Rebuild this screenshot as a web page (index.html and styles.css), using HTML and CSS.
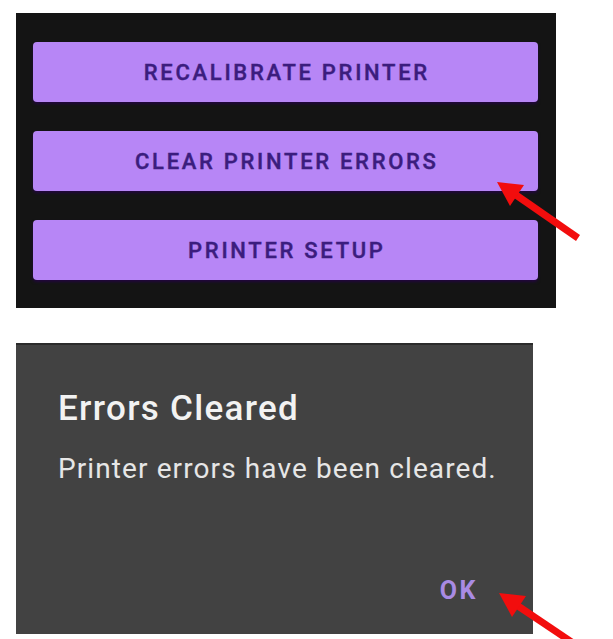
FILE: index.html
```html
<!DOCTYPE html>
<html lang="en">
<head>
    <meta charset="UTF-8">
    <meta name="viewport" content="width=device-width, initial-scale=1.0">
    <title>Printer tools</title>
    <link rel="stylesheet" href="styles.css">
</head>
<body>
    <div class="page">
        <div class="menu">
            <button class="menu-button">RECALIBRATE PRINTER</button>
            <button class="menu-button">CLEAR PRINTER ERRORS</button>
            <button class="menu-button">PRINTER SETUP</button>
        </div>

        <div class="dialog">
            <h2 class="dialog-title">Errors Cleared</h2>
            <p class="dialog-text">Printer errors have been cleared.</p>
            <div class="dialog-actions">
                <button class="dialog-ok">OK</button>
            </div>
        </div>

        <!-- pointer arrows -->
        <svg class="arrows" width="613" height="639" viewBox="0 0 613 639">
            <line x1="578" y1="238" x2="516" y2="195" stroke="#f20d0d" stroke-width="7"/>
            <polygon points="497,182 524,185 510,206" fill="#f20d0d"/>
            <line x1="582" y1="649" x2="518" y2="606" stroke="#f20d0d" stroke-width="7"/>
            <polygon points="499,593 526,596 512,617" fill="#f20d0d"/>
        </svg>
    </div>
</body>
</html>
```

FILE: styles.css
```css
body {
    margin: 0;
    background-color: #ffffff;
    font-family: Roboto, "Liberation Sans", sans-serif;
}
.page {
    position: relative;
    width: 613px;
    height: 639px;
    padding: 13px 0 0 16px;
    box-sizing: border-box;
    overflow: hidden;
}
.menu {
    width: 540px;
    height: 295px;
    box-sizing: border-box;
    padding: 29px 18px 0 17px;
    background-color: #141414;
    display: flex;
    flex-direction: column;
    gap: 29px;
}
.menu-button {
    height: 60px;
    border: none;
    border-radius: 4px;
    background-color: #b786f6;
    color: #3b1d7e;
    font-family: Roboto, sans-serif;
    font-size: 22px;
    font-weight: 500;
    letter-spacing: 2.7px;
    text-indent: 2.7px;
    -webkit-text-stroke: 0.4px #3b1d7e;
    box-shadow: 0 2px 3px rgba(40, 0, 80, 0.7);
    cursor: pointer;
}
.dialog {
    margin-top: 35px;
    width: 517px;
    height: 291px;
    box-sizing: border-box;
    padding: 44px 16px 28px 42px;
    background-color: #424242;
    border-top: 2px solid #2b2b2b;
    display: flex;
    flex-direction: column;
}
.dialog-title {
    margin: 0;
    font-size: 35px;
    line-height: 40px;
    font-weight: 500;
    letter-spacing: 1.3px;
    color: #f2f2f2;
}
.dialog-text {
    margin: 24px 0 0;
    font-size: 28px;
    line-height: 32px;
    letter-spacing: 1.1px;
    white-space: nowrap;
    color: #e6e6e6;
}
.dialog-actions {
    margin-top: auto;
    padding-right: 39px;
    display: flex;
    justify-content: flex-end;
}
.dialog-ok {
    padding: 0;
    border: none;
    background: none;
    font-family: Roboto, sans-serif;
    font-size: 25px;
    line-height: 30px;
    font-weight: 700;
    letter-spacing: 2.5px;
    color: #a98be4;
    cursor: pointer;
}
.arrows {
    position: absolute;
    top: 0;
    left: 0;
    pointer-events: none;
}
```
